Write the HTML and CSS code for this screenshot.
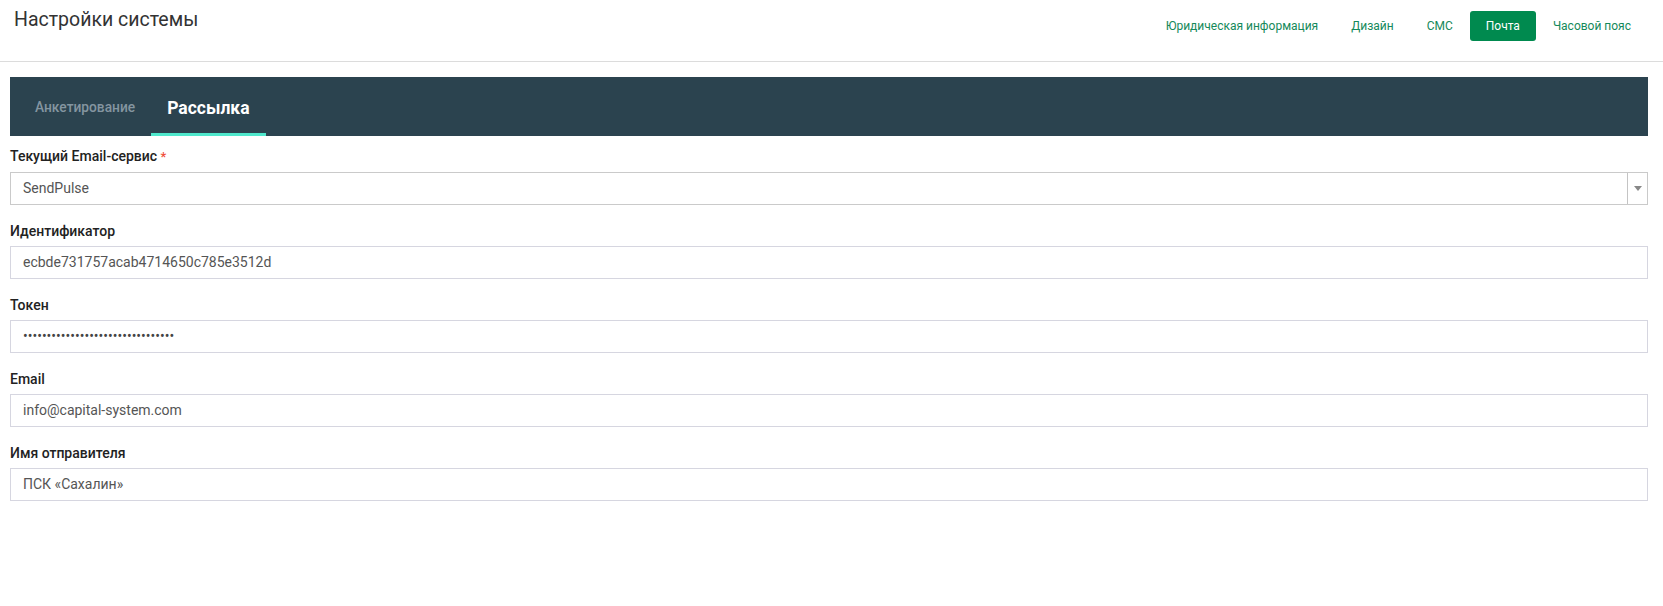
FILE: index.html
```html
<!DOCTYPE html>
<html lang="ru">
<head>
<meta charset="utf-8">
<title>Настройки системы</title>
<link rel="stylesheet" href="styles.css">
</head>
<body>
<header class="topbar">
  <h1 class="page-title">Настройки системы</h1>
  <nav class="top-nav">
    <a class="nav-item" href="#">Юридическая информация</a>
    <a class="nav-item" href="#">Дизайн</a>
    <a class="nav-item" href="#">СМС</a>
    <a class="nav-item active" href="#">Почта</a>
    <a class="nav-item" href="#">Часовой пояс</a>
  </nav>
</header>
<main class="content">
  <div class="tabs">
    <div class="tab">Анкетирование</div>
    <div class="tab active">Рассылка</div>
  </div>
  <form class="form">
    <div class="group">
      <div class="label">Текущий Email-сервис <span class="req">*</span></div>
      <div class="field select">
        <span class="select-value">SendPulse</span>
        <span class="select-arrow"><span class="tri"></span></span>
      </div>
    </div>
    <div class="group">
      <div class="label">Идентификатор</div>
      <div class="field">ecbde731757acab4714650c785e3512d</div>
    </div>
    <div class="group">
      <div class="label">Токен</div>
      <div class="field password">••••••••••••••••••••••••••••••••</div>
    </div>
    <div class="group">
      <div class="label">Email</div>
      <div class="field">info@capital-system.com</div>
    </div>
    <div class="group">
      <div class="label">Имя отправителя</div>
      <div class="field">ПСК «Сахалин»</div>
    </div>
  </form>
</main>
</body>
</html>
```
FILE: styles.css
```css
* { box-sizing: border-box; }
html, body { margin: 0; padding: 0; background: #fff; }
body {
  font-family: Roboto, "Noto Sans", "Liberation Sans", sans-serif;
  color: #222;
}
.topbar {
  display: flex;
  justify-content: space-between;
  align-items: flex-start;
  height: 62px;
  padding: 0 16px 0 14px;
  border-bottom: 1px solid #dcdcdc;
}
.page-title {
  margin: 8px 0 0 0;
  font-size: 19.5px;
  line-height: 23px;
  font-weight: 400;
  color: #333;
}
.top-nav {
  display: flex;
  margin-top: 11px;
  gap: 1px;
}
.nav-item {
  display: block;
  height: 30px;
  line-height: 30px;
  padding: 0 16px;
  font-size: 12px;
  color: #15895a;
  text-decoration: none;
  border-radius: 3px;
}
.nav-item.active {
  background: #008a4f;
  color: #fff;
}
.content {
  margin: 15px 15px 0 10px;
}
.tabs {
  display: flex;
  height: 59px;
  padding-left: 9px;
  background: #2b434f;
}
.tab {
  display: flex;
  align-items: center;
  padding: 0 16px;
  font-size: 13.75px;
  font-weight: 500;
  color: #8495a0;
  border-bottom: 3px solid transparent;
  padding-top: 3px;
}
.tab.active {
  font-size: 17.5px;
  font-weight: 700;
  color: #fff;
  border-bottom-color: #4fe8cc;
  padding-top: 6px;
}
.form {
  padding-top: 10px;
}
.group {
  margin-bottom: 16px;
}
.label {
  font-size: 14px;
  line-height: 20px;
  font-weight: 500;
  color: #222;
}
.req {
  color: #f0503c;
  font-size: 13px;
}
.field {
  margin-top: 5px;
  height: 33px;
  line-height: 31px;
  padding: 0 12px;
  border: 1px solid #d6d6e0;
  font-size: 14px;
  color: #555;
}
.field.password {
  color: #444;
}
.field.select {
  display: flex;
  padding-right: 0;
  border-color: #cacaca;
}
.select-value {
  flex: 1;
}
.select-arrow {
  width: 20px;
  border-left: 1px solid #c4c4c4;
  display: flex;
  align-items: center;
  justify-content: center;
}
.tri {
  width: 0;
  height: 0;
  border-left: 4px solid transparent;
  border-right: 4px solid transparent;
  border-top: 5px solid #888;
}
```
